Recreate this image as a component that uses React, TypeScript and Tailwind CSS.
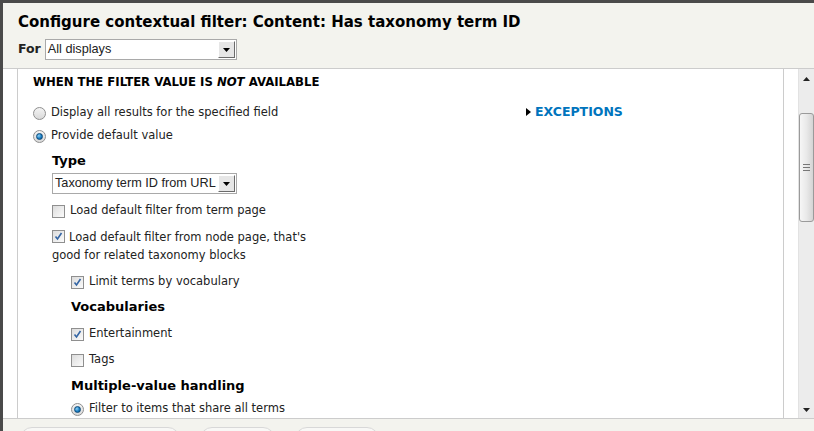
import React from "react";

const font = "font-['DejaVu_Sans',sans-serif]";

function Select({ label, w }: { label: string; w: string }) {
  return (
    <div className={`${w} h-[21px] flex items-stretch bg-white border border-[#a9a9a9]`}>
      <span className="flex-1 pl-[2px] flex items-center text-[12.7px] text-[#222] font-['Liberation_Sans',Arial,sans-serif] whitespace-nowrap overflow-hidden">
        {label}
      </span>
      <span className="w-[17px] shrink-0 my-[1px] mr-[1px] flex items-center justify-center bg-[#e6e6e6] border border-t-white border-l-white border-r-[#6b6b6b] border-b-[#6b6b6b]">
        <svg width="7" height="4" viewBox="0 0 7 4">
          <path d="M0 0h7L3.5 4z" fill="#000" />
        </svg>
      </span>
    </div>
  );
}

function Radio({ on }: { on?: boolean }) {
  return (
    <span className="w-[13px] h-[13px] rounded-full border border-[#8f8f8f] bg-gradient-to-b from-[#f4f4f4] to-[#d9d9d9] flex items-center justify-center shrink-0">
      {on && (
        <span className="w-[7px] h-[7px] rounded-full bg-[radial-gradient(circle_at_35%_35%,#8fd0f5,#1a7fc4_55%,#0b4f86)] border border-[#0d4a7a]" />
      )}
    </span>
  );
}

function Check({ on }: { on?: boolean }) {
  return (
    <span className="w-[13px] h-[13px] border border-[#8f8f8f] bg-gradient-to-br from-[#dcdcdc] to-[#fbfbfb] flex items-center justify-center shrink-0">
      {on && (
        <svg width="9" height="9" viewBox="0 0 9 9">
          <path d="M1.5 4.5l2 2.5L7.5 1" stroke="#3465a4" strokeWidth="1.6" fill="none" />
        </svg>
      )}
    </span>
  );
}

function Row({ children, className = "" }: { children: React.ReactNode; className?: string }) {
  return <div className={`flex items-center gap-[5px] h-[18px] ${className}`}>{children}</div>;
}

export default function App() {
  return (
    <div className={`w-[814px] h-[431px] bg-[#4a4a4a] pt-[3px] pl-[3px] overflow-hidden ${font} text-[11.5px] text-[#222]`}>
      <div className="w-full h-full bg-[#f3f3ee] flex flex-col">
        {/* header */}
        <div className="pl-[15px] pt-[9px] pb-[8px] border-b border-[#cccccc]">
          <h1 className="text-[15px] font-bold leading-[20px] text-black">
            Configure contextual filter: Content: Has taxonomy term ID
          </h1>
          <div className="flex items-center gap-[4px] mt-[7px]">
            <span className="font-bold text-[12.5px]">For</span>
            <Select label="All displays" w="w-[192px]" />
          </div>
        </div>

        {/* scrolling body */}
        <div className="flex-1 flex bg-white min-h-0">
          <div className="w-[14px] shrink-0" />
          <div className="flex-1 min-w-0 border-l border-r border-[#cccccc] flex overflow-hidden">
            <div className="w-[508px] shrink-0 pl-[15px] pt-[5px]">
              <div className="h-[18px] flex items-center font-bold text-[11.7px] text-black whitespace-nowrap">
                WHEN THE FILTER VALUE IS&nbsp;<i>NOT</i>&nbsp;AVAILABLE
              </div>
              <Row className="mt-[12px]">
                <Radio /> <span>Display all results for the specified field</span>
              </Row>
              <Row className="mt-[5px]">
                <Radio on /> <span>Provide default value</span>
              </Row>
              <div className="pl-[19px]">
                <div className="mt-[7px] h-[18px] flex items-center font-bold text-[13px] text-black">Type</div>
                <div className="mt-[3px]">
                  <Select label="Taxonomy term ID from URL" w="w-[185px]" />
                </div>
                <Row className="mt-[8px]">
                  <Check /> <span>Load default filter from term page</span>
                </Row>
                <div className="mt-[8px] w-[280px] leading-[18px]">
                  <span className="inline-flex align-middle mr-[4px] -mt-[2px]">
                    <Check on />
                  </span>
                  Load default filter from node page, that's good for related taxonomy blocks
                </div>
                <div className="pl-[19px]">
                  <Row className="mt-[9px]">
                    <Check on /> <span>Limit terms by vocabulary</span>
                  </Row>
                  <div className="mt-[7px] h-[18px] flex items-center font-bold text-[13px] text-black">Vocabularies</div>
                  <Row className="mt-[9px]">
                    <Check on /> <span>Entertainment</span>
                  </Row>
                  <Row className="mt-[8px]">
                    <Check /> <span>Tags</span>
                  </Row>
                  <div className="mt-[8px] h-[18px] flex items-center font-bold text-[13px] text-black">
                    Multiple-value handling
                  </div>
                  <Row className="mt-[5px]">
                    <Radio on /> <span>Filter to items that share all terms</span>
                  </Row>
                </div>
              </div>
            </div>
            <div className="pt-[34px]">
              <div className="flex items-center gap-[4px] h-[18px]">
                <svg width="5" height="8" viewBox="0 0 5 8">
                  <path d="M0 0l5 4-5 4z" fill="#000" />
                </svg>
                <span className="font-bold text-[12.5px] text-[#0074bd]">EXCEPTIONS</span>
              </div>
            </div>
          </div>
          <div className="w-[14px] shrink-0" />
          {/* scrollbar */}
          <div className="w-[16px] shrink-0 bg-[#ececec] border-l border-[#e2e2e2] flex flex-col items-center">
            <div className="h-[16px] flex items-center justify-center mt-[2px]">
              <svg width="7" height="4" viewBox="0 0 7 4">
                <path d="M3.5 0L7 4H0z" fill="#222" />
              </svg>
            </div>
            <div className="mt-[26px] w-[15px] h-[109px] rounded-[3px] border border-[#9a9a9a] bg-gradient-to-r from-[#f6f6f6] via-[#e9e9e9] to-[#d4d4d4] flex flex-col items-center justify-center gap-[2px]">
              <span className="w-[7px] h-px bg-[#777]" />
              <span className="w-[7px] h-px bg-[#777]" />
              <span className="w-[7px] h-px bg-[#777]" />
            </div>
            <div className="flex-1" />
            <div className="h-[16px] flex items-center justify-center">
              <svg width="7" height="4" viewBox="0 0 7 4">
                <path d="M0 0h7L3.5 4z" fill="#222" />
              </svg>
            </div>
          </div>
        </div>

        {/* footer */}
        <div className="h-[13px] shrink-0 border-t border-[#cccccc] bg-[#f3f3ee] flex items-start gap-[20px] pl-[17px] pt-[8px] overflow-hidden">
          <div className="w-[160px] h-[24px] shrink-0 rounded-[12px] border border-[#d8d8d8] bg-[#f8f8f6]" />
          <div className="w-[75px] h-[24px] shrink-0 rounded-[12px] border border-[#d8d8d8] bg-[#f8f8f6]" />
          <div className="w-[84px] h-[24px] shrink-0 rounded-[12px] border border-[#d8d8d8] bg-[#f8f8f6]" />
        </div>
      </div>
    </div>
  );
}
